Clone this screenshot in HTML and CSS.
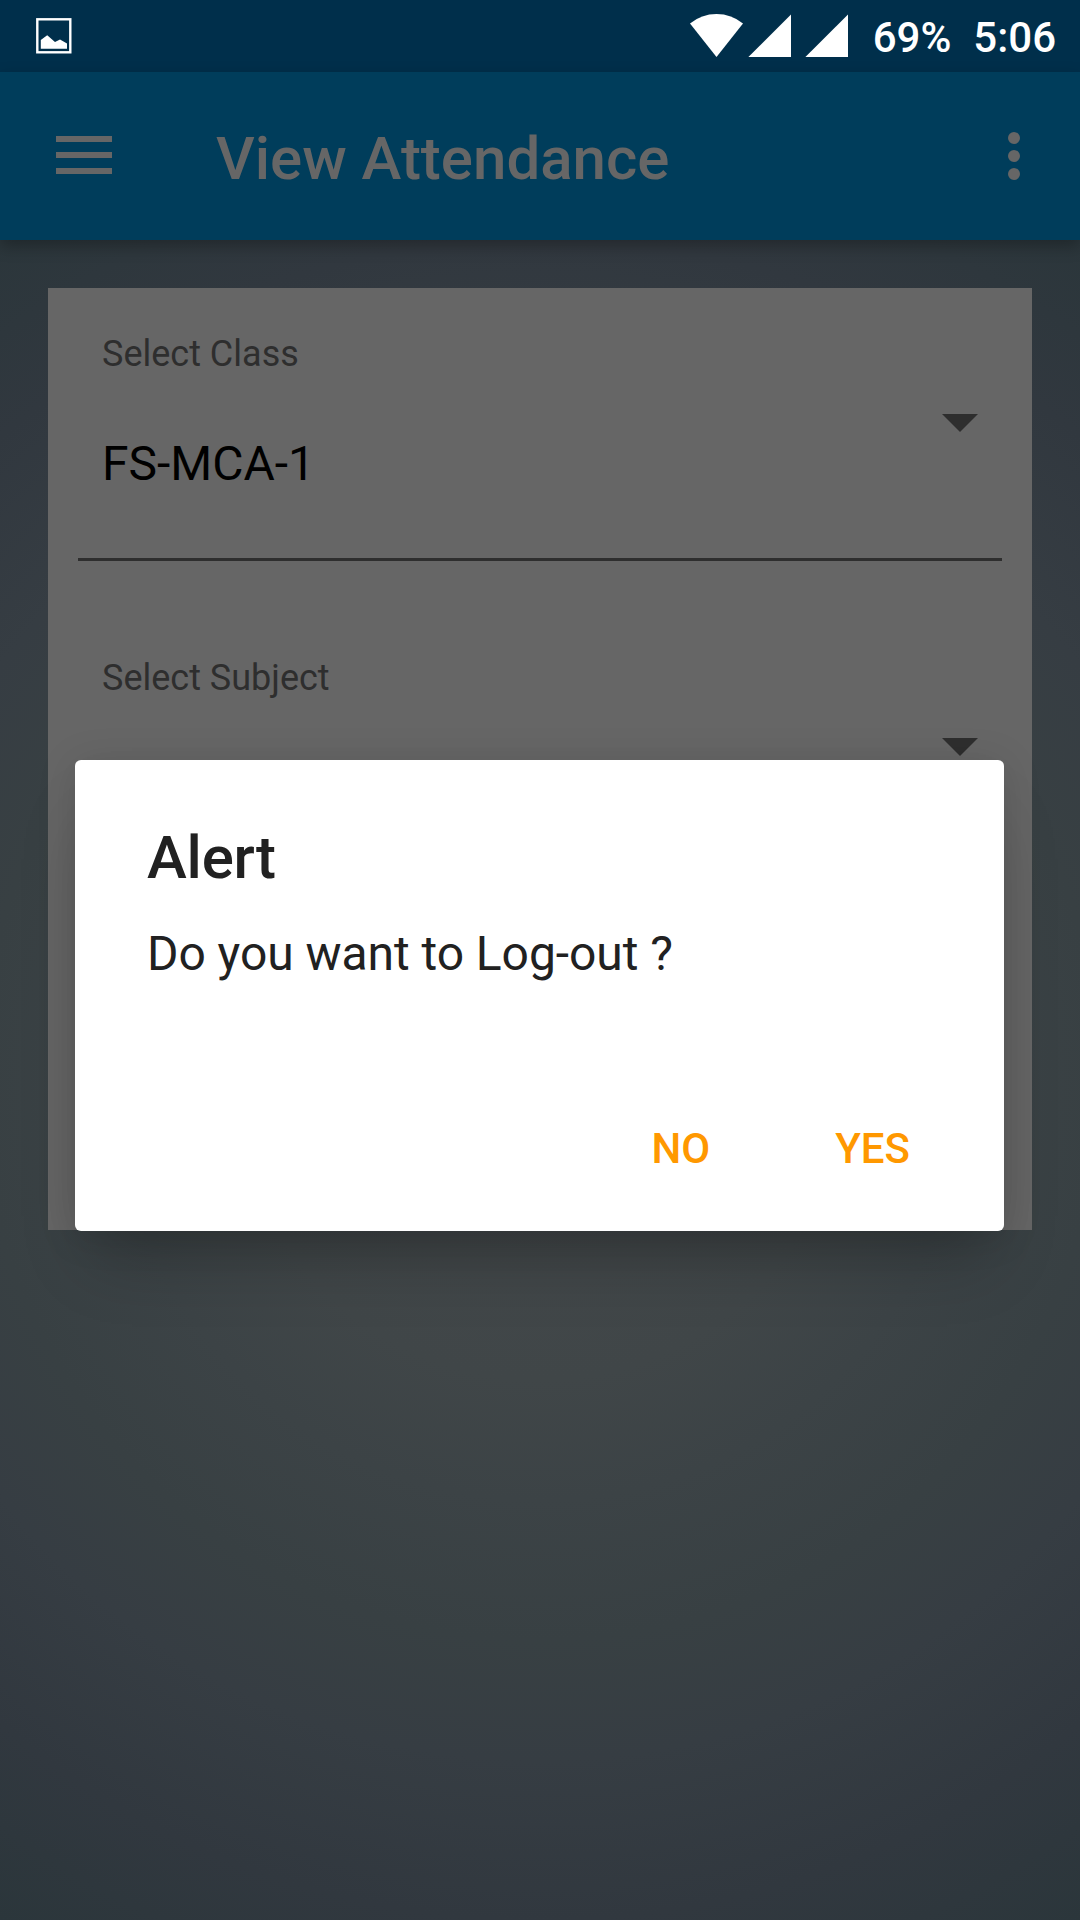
FILE: index.html
```html
<!DOCTYPE html>
<html lang="en">
<head>
<meta charset="utf-8">
<title>View Attendance</title>
<link rel="stylesheet" href="styles.css">
</head>
<body>
<div class="screen">
  <header class="status-bar">
    <svg class="status-image" viewBox="0 0 36 36" width="36" height="36">
      <rect x="1.3" y="1.3" width="33" height="33" fill="none" stroke="#fff" stroke-width="2.4"/>
      <path d="M4.8 22 11.2 17.2 19 24 24 21.4 31 25.4V30.8H4.8z" fill="#fff"/>
    </svg>
    <div class="status-right">
      <svg class="status-signals" viewBox="0 0 160 44" width="160" height="44" fill="#fff">
        <path d="M0 9.5Q11.5 0 26.5 0T53 9.5L26.5 43z"/>
        <path d="M58.4 43 101 0.4V43z"/>
        <path d="M115.4 43 158 0.4V43z"/>
      </svg>
      <span class="battery">69%</span>
      <span class="clock">5:06</span>
    </div>
  </header>
  <nav class="app-bar">
    <svg class="menu-icon" viewBox="0 0 56 38" width="56" height="38" fill="#666">
      <path d="M0 0h56v6H0zM0 16h56v6H0zM0 32h56v6H0z"/>
    </svg>
    <h1 class="app-title">View Attendance</h1>
    <svg class="more-icon" viewBox="0 0 12 48" width="12" height="48" fill="#666">
      <circle cx="6" cy="6" r="6"/><circle cx="6" cy="24" r="6"/><circle cx="6" cy="42" r="6"/>
    </svg>
  </nav>
  <main class="content">
    <section class="card">
      <div class="field">
        <div class="field-text">
          <div class="field-label">Select Class</div>
          <div class="field-value">FS-MCA-1</div>
        </div>
        <svg class="arrow" viewBox="0 0 36 18" width="36" height="18"><path d="M0 0H36L18 18z" fill="#2e2e2e"/></svg>
      </div>
      <div class="field">
        <div class="field-text">
          <div class="field-label">Select Subject</div>
        </div>
        <svg class="arrow" viewBox="0 0 36 18" width="36" height="18"><path d="M0 0H36L18 18z" fill="#2e2e2e"/></svg>
      </div>
    </section>
  </main>
  <div class="dialog" role="alertdialog">
    <h2 class="dialog-title">Alert</h2>
    <p class="dialog-message">Do you want to Log-out ?</p>
    <div class="dialog-actions">
      <span class="action">NO</span>
      <span class="action">YES</span>
    </div>
  </div>
</div>
</body>
</html>
```
FILE: styles.css
```css
* { box-sizing: border-box; }
body, h1, h2, p { margin: 0; }
body { font-family: Roboto, sans-serif; }
svg { display: block; flex: none; }

.screen {
  position: relative;
  width: 1080px;
  height: 1920px;
  overflow: hidden;
  display: flex;
  flex-direction: column;
  background: radial-gradient(circle 1000px at 540px 1080px, #45494b 0%, #404648 30%, #3c4346 42%, #384043 56%, #363d43 68%, #31383f 84%, #2b363b 100%);
}

.status-bar {
  height: 72px;
  flex: none;
  display: flex;
  justify-content: space-between;
  align-items: center;
  padding: 0 24px 0 36px;
  background: #002f4b;
  color: #fff;
}
.status-right { display: flex; align-items: center; }
.status-signals { margin-right: 23px; }
.battery, .clock {
  padding-top: 3px;
  font-size: 42px;
  font-weight: 500;
  line-height: 50px;
}
.clock { margin-left: 22px; }

.app-bar {
  height: 168px;
  flex: none;
  display: flex;
  align-items: center;
  padding: 0 60px 0 56px;
  background: #003d5b;
  box-shadow: 0 6px 15px rgba(0, 0, 0, .28);
}
.app-title {
  flex: 1;
  margin-left: 104px;
  padding-top: 5px;
  font-size: 60px;
  font-weight: 500;
  line-height: 70px;
  color: #666;
}
.menu-icon { margin-bottom: 2px; }

.content { padding: 48px; }
.card {
  height: 942px;
  padding: 0 30px;
  background: #666;
  display: flex;
  flex-direction: column;
  gap: 51px;
}
.field {
  height: 273px;
  display: flex;
  justify-content: space-between;
  padding: 0 24px;
  border-bottom: 3px solid #2e2e2e;
}
.field-text {
  display: flex;
  flex-direction: column;
  gap: 61px;
  padding-top: 45px;
}
.field-label { font-size: 36px; line-height: 42px; color: #2e2e2e; }
.field-value { font-size: 48px; line-height: 56px; color: #000; }
.arrow { margin-top: 126px; }

.dialog {
  position: absolute;
  left: 75px;
  top: 760px;
  width: 929px;
  height: 471px;
  padding: 63px 94px 0 72px;
  border-radius: 6px;
  background: #fff;
  color: #212121;
  box-shadow: 0 42px 66px -18px rgba(0, 0, 0, .24), 0 4px 40px rgba(0, 0, 0, .12);
}
.dialog-title { font-size: 60px; font-weight: 500; line-height: 70px; letter-spacing: -.2px; }
.dialog-message { margin-top: 33px; font-size: 48px; line-height: 56px; letter-spacing: -.06px; }
.dialog-actions {
  display: flex;
  justify-content: flex-end;
  gap: 125px;
  margin-top: 142px;
}
.action { font-size: 42px; font-weight: 500; line-height: 50px; color: #ff9800; }
```
